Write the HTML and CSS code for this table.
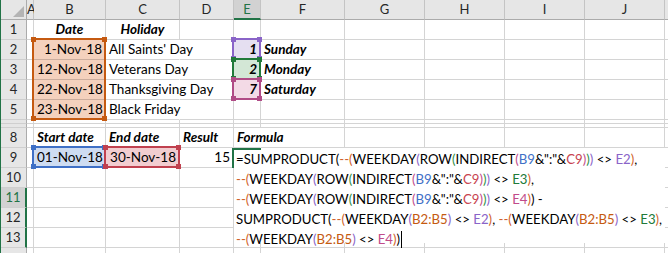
FILE: index.html
```html
<!DOCTYPE html>
<html>
<head>
  <link rel="stylesheet" href="styles.css">
</head>
<body>
  <div class="book">
    <!-- cell layer -->
    <div class="sheet cells">
      <div class="corner"><span class="tri"></span></div>
      <div class="hd">A</div><div class="hd">B</div><div class="hd">C</div><div class="hd">D</div>
      <div class="hd on">E</div><div class="hd">F</div><div class="hd">G</div><div class="hd">H</div>
      <div class="hd">I</div><div class="hd">J</div><div class="hd"></div>

      <div class="rh">1</div><div></div>
      <div class="bi mid">Date</div><div class="bi mid">Holiday</div>
      <div></div><div></div><div></div><div></div><div></div><div></div><div></div><div></div>

      <div class="rh">2</div><div></div>
      <div class="num fill-o">1-Nov-18</div><div class="spill">All Saints' Day</div>
      <div></div><div class="bi num fill-p">1</div><div class="bi">Sunday</div>
      <div></div><div></div><div></div><div></div><div></div>

      <div class="rh">3</div><div></div>
      <div class="num fill-o">12-Nov-18</div><div class="spill">Veterans Day</div>
      <div></div><div class="bi num fill-g">2</div><div class="bi">Monday</div>
      <div></div><div></div><div></div><div></div><div></div>

      <div class="rh">4</div><div></div>
      <div class="num fill-o">22-Nov-18</div><div class="spill">Thanksgiving Day</div>
      <div></div><div class="bi num fill-m">7</div><div class="bi">Saturday</div>
      <div></div><div></div><div></div><div></div><div></div>

      <div class="rh">5</div><div></div>
      <div class="num fill-o">23-Nov-18</div><div class="spill">Black Friday</div>
      <div></div><div></div><div></div><div></div><div></div><div></div><div></div><div></div>

      <!-- rows 6 and 7 are hidden -->
      <div class="rh"></div><div></div><div></div><div></div><div></div><div></div>
      <div></div><div></div><div></div><div></div><div></div><div></div>
      <div class="rh"></div><div></div><div></div><div></div><div></div><div></div>
      <div></div><div></div><div></div><div></div><div></div><div></div>

      <div class="rh">8</div><div></div>
      <div class="bi">Start date</div><div class="bi">End date</div><div class="bi">Result</div>
      <div class="bi spill">Formula</div>
      <div></div><div></div><div></div><div></div><div></div><div></div>

      <div class="rh">9</div><div></div>
      <div class="num fill-b">01-Nov-18</div><div class="num fill-r">30-Nov-18</div><div class="num">15</div>
      <div></div><div></div><div></div><div></div><div></div><div></div><div></div>

      <div class="rh">10</div><div></div><div></div><div></div><div></div><div></div>
      <div></div><div></div><div></div><div></div><div></div><div></div>
      <div class="rh sel cur">11</div><div></div><div></div><div></div><div></div><div></div>
      <div></div><div></div><div></div><div></div><div></div><div></div>
      <div class="rh sel">12</div><div></div><div></div><div></div><div></div><div></div>
      <div></div><div></div><div></div><div></div><div></div><div></div>
      <div class="rh sel">13</div><div></div><div></div><div></div><div></div><div></div>
      <div></div><div></div><div></div><div></div><div></div><div></div>
      <div class="rh"></div><div></div><div></div><div></div><div></div><div></div>
      <div></div><div></div><div></div><div></div><div></div><div></div>
    </div>

    <!-- range highlights and the in-cell editor -->
    <div class="sheet marks">
      <div class="editor">
        <div class="ln">=SUMPRODUCT(<span class="k2">--(</span>WEEKDAY<span class="k3">(</span>ROW<span class="k4">(</span>INDIRECT<span class="k5">(</span><span class="rb">B9</span>&amp;":"&amp;<span class="rr">C9</span><span class="k5">)</span><span class="k4">)</span><span class="k3">)</span> &lt;&gt; <span class="rp">E2</span><span class="k2">)</span>,</div>
        <div class="ln"><span class="k2">--(</span>WEEKDAY<span class="k3">(</span>ROW<span class="k4">(</span>INDIRECT<span class="k5">(</span><span class="rb">B9</span>&amp;":"&amp;<span class="rr">C9</span><span class="k5">)</span><span class="k4">)</span><span class="k3">)</span> &lt;&gt; <span class="rg">E3</span><span class="k2">)</span>,</div>
        <div class="ln"><span class="k2">--(</span>WEEKDAY<span class="k3">(</span>ROW<span class="k4">(</span>INDIRECT<span class="k5">(</span><span class="rb">B9</span>&amp;":"&amp;<span class="rr">C9</span><span class="k5">)</span><span class="k4">)</span><span class="k3">)</span> &lt;&gt; <span class="rm">E4</span><span class="k2">)</span>) -</div>
        <div class="ln">SUMPRODUCT(<span class="k2">--(</span>WEEKDAY<span class="k3">(</span><span class="ro">B2:B5</span><span class="k3">)</span> &lt;&gt; <span class="rp">E2</span><span class="k2">)</span>, <span class="k2">--(</span>WEEKDAY<span class="k3">(</span><span class="ro">B2:B5</span><span class="k3">)</span> &lt;&gt; <span class="rg">E3</span><span class="k2">)</span>,</div>
        <div class="ln"><span class="k2">--(</span>WEEKDAY<span class="k3">(</span><span class="ro">B2:B5</span><span class="k3">)</span> &lt;&gt; <span class="rm">E4</span><span class="k2">)</span>)<span class="caret"></span></div>
      </div>
      <div class="active"></div>

      <div class="rng r-o"><i class="tl"></i><i class="tr"></i><i class="bl"></i><i class="br"></i></div>
      <div class="rng r-p"><i class="tl"></i><i class="tr"></i><i class="bl"></i><i class="br"></i></div>
      <div class="rng r-g"><i class="tl"></i><i class="tr"></i><i class="bl"></i><i class="br"></i></div>
      <div class="rng r-m"><i class="tl"></i><i class="tr"></i><i class="bl"></i><i class="br"></i></div>
      <div class="rng r-b"><i class="tl"></i><i class="tr"></i><i class="bl"></i><i class="br"></i></div>
      <div class="rng r-r"><i class="tl"></i><i class="tr"></i><i class="bl"></i><i class="br"></i></div>
    </div>
  </div>
</body>
</html>
```

FILE: styles.css
```css
body {
  margin: 0;
  background: #fff;
  font-family: Lato, "Liberation Sans", sans-serif;
  color: #000;
}

/* both layers share one grid cell so they stack */
.book {
  display: grid;
  height: 253px;
  overflow: hidden;
  border-left: 1px solid #217346;
}
.book > .sheet {
  grid-area: 1 / 1;
}

.sheet {
  display: grid;
  grid-template-columns: 26px 7px 72px 74px 54px 27px 84px 80px 80px 80px 80px 1fr;
  grid-template-rows: 20px repeat(5, 20px) 4px 4px repeat(7, 20px);
}

.cells > div {
  box-sizing: border-box;
  border-right: 1px solid rgba(0, 0, 0, 0.17);
  border-bottom: 1px solid rgba(0, 0, 0, 0.17);
  padding: 0 3px;
  font-size: 13.5px;
  line-height: 19px;
  white-space: nowrap;
  overflow: visible;
}

/* headers */
.cells > .corner {
  background: #e6e6e6;
  border-right-color: #ababab;
  border-bottom-color: #ababab;
  display: flex;
  justify-content: flex-end;
  align-items: flex-end;
  padding: 0 2px 2px 0;
}
.tri {
  width: 0;
  height: 0;
  border-left: 11px solid transparent;
  border-bottom: 11px solid #b4b4b4;
}
.cells > .hd {
  background: #e6e6e6;
  border-right-color: #c4c4c4;
  border-bottom-color: #ababab;
  text-align: center;
  font-size: 13px;
  color: #262626;
  padding: 0;
}
.cells > .hd.on {
  background: #d2d2d2;
  color: #217346;
  border-bottom: 2px solid #217346;
}
.cells > .rh {
  background: #e6e6e6;
  border-right-color: #ababab;
  border-bottom-color: #cfcfcf;
  text-align: center;
  font-size: 13px;
  color: #262626;
  padding: 0;
}
.cells > .rh.sel {
  border-right: 2px solid #217346;
}
.cells > .rh.cur {
  background: #d2d2d2;
  color: #217346;
}

/* cell content */
.cells > .bi {
  font-weight: 700;
  font-style: italic;
}
.cells > .mid {
  text-align: center;
}
.cells > .num {
  text-align: right;
}
.cells > .spill {
  border-right-color: transparent;
}

.fill-o { background: #f4d1bd; }
.fill-p { background: #e5dff1; }
.fill-g { background: #d3e7d6; }
.fill-m { background: #f3dae6; }
.fill-b { background: #cedcf1; }
.fill-r { background: #f2cdd0; }

/* range outlines with corner handles */
.rng {
  position: relative;
  border: 2px solid;
  margin: -2px 0 0 -2px;
}
.rng i {
  position: absolute;
  width: 5px;
  height: 5px;
  background: currentColor;
}
.rng .tl { left: -3px; top: -3px; }
.rng .tr { right: -3px; top: -3px; }
.rng .bl { left: -3px; bottom: -3px; }
.rng .br { right: -3px; bottom: -3px; }

.r-o { grid-area: 3 / 3 / 7 / 4; color: #c55a11; }
.r-p { grid-area: 3 / 6 / 4 / 7; color: #8a64c8; }
.r-g { grid-area: 4 / 6 / 5 / 7; color: #217a3a; }
.r-m { grid-area: 5 / 6 / 6 / 7; color: #b04b86; }
.r-b { grid-area: 10 / 3 / 11 / 4; color: #3f70c6; }
.r-r { grid-area: 10 / 4 / 11 / 5; color: #c0414f; }

/* active cell E9 */
.active {
  grid-area: 10 / 6 / 11 / 7;
  margin-left: -2px;
  border-top: 2px solid #217346;
  border-left: 2px solid #217346;
}

/* formula being edited, spilling over E9:J13 */
.editor {
  grid-area: 10 / 6 / 15 / 12;
  background: #fff;
  margin-bottom: 5px;
  padding: 1px 0 0 2px;
  font-size: 13.2px;
  white-space: nowrap;
}
.ln {
  height: 20px;
  line-height: 20px;
}
.caret {
  display: inline-block;
  width: 1px;
  height: 17px;
  background: #000;
  vertical-align: -4px;
  margin-left: 1px;
}

.k2 { color: #d0622a; }
.k3 { color: #8a64c8; }
.k4 { color: #2f8f46; }
.k5 { color: #c14b8a; }

.rb { color: #3f70c6; }
.rr { color: #c8434f; }
.rp { color: #8a64c8; }
.rg { color: #217a3a; }
.rm { color: #c14b8a; }
.ro { color: #c55a11; }
```
